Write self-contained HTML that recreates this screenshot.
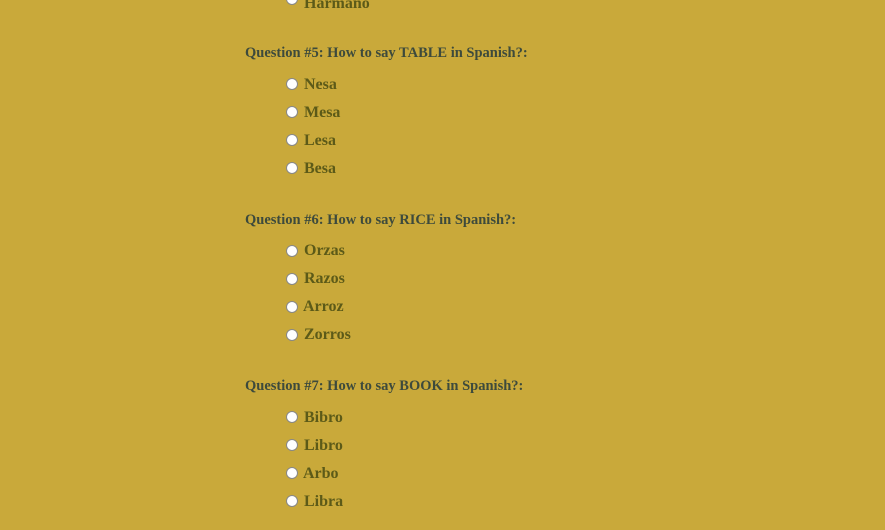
<!DOCTYPE html>
<html><head><style>
body{margin:0;width:885px;height:530px;background:#c9a93a;position:relative;overflow:hidden}
.q,.o{font-family:"Liberation Serif","Times New Roman","DejaVu Serif",serif;font-weight:bold}
.q{position:absolute;left:245px;font-size:14.5px;line-height:20px;color:#3d4a3c}
.o{position:absolute;left:304px;font-size:16px;line-height:20px;color:#5c5a18}
.r{position:absolute;left:286px;width:10px;height:10px;border-radius:50%;background:#fff;border:1px solid #888}
</style></head><body>
<div class="r" style="top:-7px"></div><div class="o" style="top:-6px">Harmano</div>
<div class="q" style="top:43px">Question #5: How to say TABLE in Spanish?:</div>
<div class="r" style="top:78px"></div><div class="o" style="top:75px">Nesa</div>
<div class="r" style="top:106px"></div><div class="o" style="top:103px">Mesa</div>
<div class="r" style="top:134px"></div><div class="o" style="top:131px">Lesa</div>
<div class="r" style="top:162px"></div><div class="o" style="top:159px">Besa</div>
<div class="q" style="top:210px">Question #6: How to say RICE in Spanish?:</div>
<div class="r" style="top:245px"></div><div class="o" style="top:241px">Orzas</div>
<div class="r" style="top:273px"></div><div class="o" style="top:269px">Razos</div>
<div class="r" style="top:301px"></div><div class="o" style="top:297px;left:303px">Arroz</div>
<div class="r" style="top:329px"></div><div class="o" style="top:325px">Zorros</div>
<div class="q" style="top:376px">Question #7: How to say BOOK in Spanish?:</div>
<div class="r" style="top:411px"></div><div class="o" style="top:408px">Bibro</div>
<div class="r" style="top:439px"></div><div class="o" style="top:436px">Libro</div>
<div class="r" style="top:467px"></div><div class="o" style="top:464px;left:303px">Arbo</div>
<div class="r" style="top:495px"></div><div class="o" style="top:492px">Libra</div>
</body></html>
